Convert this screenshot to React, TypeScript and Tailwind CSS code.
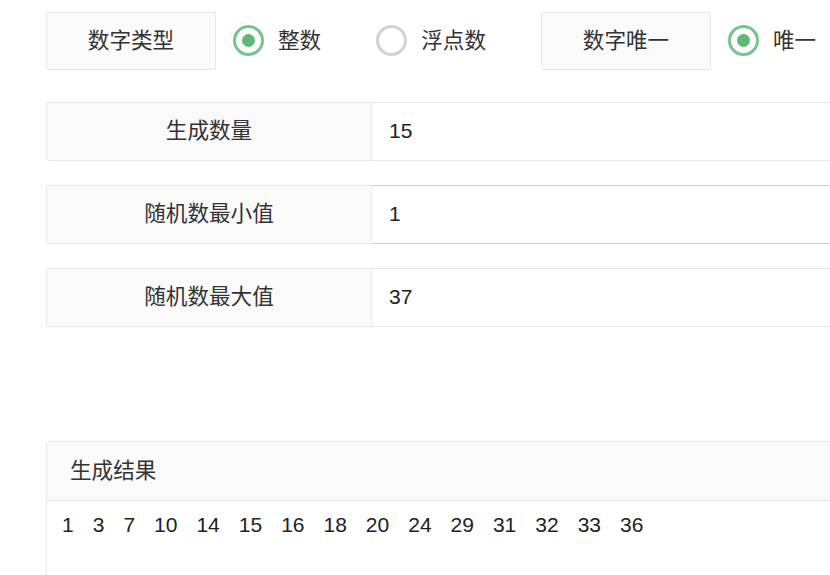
import React from "react";

const font = { fontFamily: '"Liberation Sans", "Noto Sans CJK SC", sans-serif' };

function Radio({ checked, label }: { checked: boolean; label: string }) {
  return (
    <div className="flex items-center">
      <div
        className={
          "w-[31px] h-[31px] rounded-full border-[3px] flex items-center justify-center " +
          (checked ? "border-[#76c48e]" : "border-[#d2d2d2]")
        }
      >
        {checked && <div className="w-[13px] h-[13px] rounded-full bg-[#5fb878]" />}
      </div>
      <span className="ml-[14px] text-[21.6px] text-[#333]">{label}</span>
    </div>
  );
}

function Row({ label, value, focus }: { label: string; value: string; focus?: boolean }) {
  return (
    <div className="flex h-[59px]">
      <div className="w-[326px] shrink-0 flex items-center justify-center bg-[#fafafa] border border-[#e8e8e8] rounded-l-[3px] text-[21.6px] text-[#333] pb-[1px]">
        {label}
      </div>
      <div
        className={
          "flex-1 flex items-center pl-[17px] bg-white border border-l-0 text-[21px] text-[#222] pb-[1px] " +
          (focus ? "border-[#d0d0d0] border-l border-l-[#c8c8c8]" : "border-[#e8e8e8]")
        }
      >
        {value}
      </div>
    </div>
  );
}

export default function App() {
  const nums = [1, 3, 7, 10, 14, 15, 16, 18, 20, 24, 29, 31, 32, 33, 36];
  return (
    <div className="w-[830px] h-[575px] overflow-hidden bg-white" style={font}>
      <div className="w-[900px] pl-[46px] pt-[12px]">
        <div className="flex items-center">
          <div className="w-[170px] h-[58px] flex items-center justify-center bg-[#fafafa] border border-[#e8e8e8] rounded-[2px] text-[21.6px] text-[#333]">
            数字类型
          </div>
          <div className="ml-[17px]">
            <Radio checked label="整数" />
          </div>
          <div className="ml-[55px]">
            <Radio checked={false} label="浮点数" />
          </div>
          <div className="ml-[55px] w-[170px] h-[58px] flex items-center justify-center bg-[#fafafa] border border-[#e8e8e8] rounded-[2px] text-[21.6px] text-[#333]">
            数字唯一
          </div>
          <div className="ml-[17px]">
            <Radio checked label="唯一" />
          </div>
        </div>

        <div className="mt-[32px] flex flex-col gap-[24px]">
          <Row label="生成数量" value="15" />
          <Row label="随机数最小值" value="1" focus />
          <Row label="随机数最大值" value="37" />
        </div>

        <div className="mt-[114px] border border-[#e8e8e8] rounded-t-[3px]">
          <div className="h-[59px] flex items-center pl-[23px] bg-[#fafafa] border-b border-[#e8e8e8] text-[21.6px] text-[#333]">
            生成结果
          </div>
          <div className="pl-[15px] pt-[8px] h-[100px] text-[21px] text-[#222]">
            {nums.map((n) => (
              <span key={n} className="mr-[19px]">
                {n}
              </span>
            ))}
          </div>
        </div>
      </div>
    </div>
  );
}
